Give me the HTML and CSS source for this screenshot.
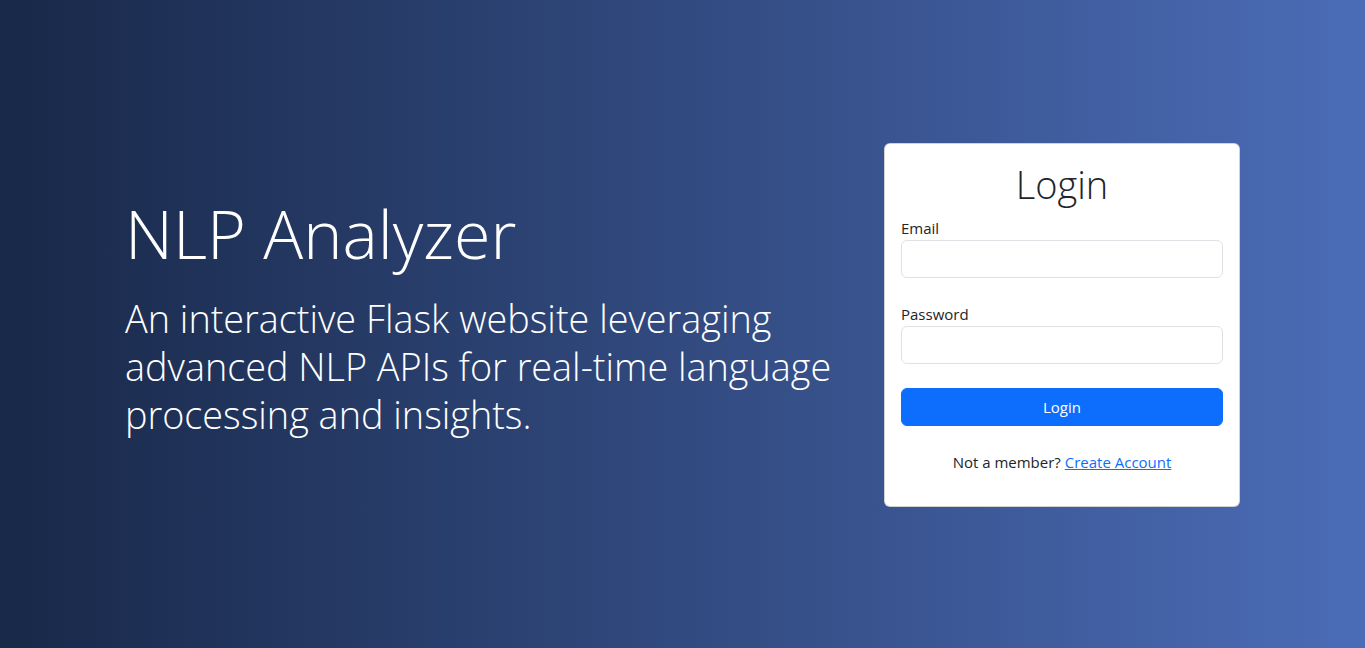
FILE: index.html
```html
<!DOCTYPE html>
<html lang="en">
<head>
<meta charset="utf-8">
<title>NLP Analyzer - Login</title>
<link rel="stylesheet" href="styles.css">
</head>
<body>
<main class="page">
  <section class="hero">
    <h1 class="hero-title">NLP Analyzer</h1>
    <p class="hero-lead">An interactive Flask website leveraging<br>advanced NLP APIs for real-time language<br>processing and insights.</p>
  </section>
  <section class="card">
    <h2 class="card-title">Login</h2>
    <form class="form">
      <div class="field">
        <label class="label" for="email">Email</label>
        <input class="input" id="email" type="email">
      </div>
      <div class="field">
        <label class="label" for="password">Password</label>
        <input class="input" id="password" type="password">
      </div>
      <button class="btn" type="button">Login</button>
    </form>
    <p class="signup">Not a member? <a href="#" class="link">Create Account</a></p>
  </section>
</main>
</body>
</html>
```
FILE: styles.css
```css
* { box-sizing: border-box; }
html, body { margin: 0; padding: 0; }
body {
  font-family: "Open Sans", "Noto Sans", sans-serif;
  font-size: 15px;
  line-height: 24px;
  color: #212529;
  background: linear-gradient(to right, #182848, #4b6cb7);
  min-height: 100vh;
}
.page {
  height: 100vh;
  display: flex;
  align-items: center;
  justify-content: space-between;
  padding: 0 125px;
}
.hero { color: #fff; margin-top: -3px; }
.hero-title {
  margin: 0 0 19px;
  font-size: 66.5px;
  font-weight: 300;
  line-height: 86px;
  white-space: nowrap;
}
.hero-lead {
  margin: 0 0 16px;
  font-size: 37.8px;
  font-weight: 300;
  line-height: 48px;
  white-space: nowrap;
}
.card {
  width: 356px;
  background: #fff;
  border: 1px solid rgba(0,0,0,.175);
  border-radius: 6px;
  padding: 16px;
  margin-top: 2px;
}
.card-title {
  margin: 0 0 8px;
  text-align: center;
  font-size: 38px;
  font-weight: 300;
  line-height: 48px;
  color: #212529;
}
.form { display: flex; flex-direction: column; gap: 24px; }
.field { display: flex; flex-direction: column; }
.label { margin-bottom: 0; line-height: 24px; }
.input {
  height: 38px;
  border: 1px solid #dee2e6;
  border-radius: 6px;
  background: #fff;
  font: inherit;
  padding: 6px 12px;
}
.btn {
  height: 38px;
  border: 1px solid #0d6efd;
  background: #0d6efd;
  color: #fff;
  border-radius: 6px;
  font: inherit;
  cursor: pointer;
}
.signup {
  margin: 24px 0 16px;
  text-align: center;
}
.link { color: #0d6efd; }
```
